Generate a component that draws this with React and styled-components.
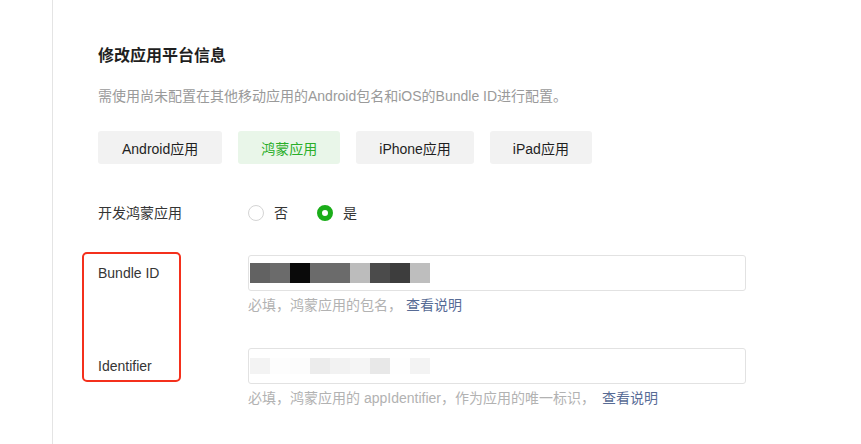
import React from 'react';
import styled, { createGlobalStyle } from 'styled-components';

const GlobalStyle = createGlobalStyle`
  html, body {
    margin: 0;
    padding: 0;
    background: #fff;
  }
  body {
    font-family: "Liberation Sans", "Noto Sans CJK SC", sans-serif;
    color: #353535;
  }
`;

const Page = styled.div`
  display: flex;
  height: 444px;
  overflow: hidden;
`;

const Sidebar = styled.div`
  width: 52px;
  flex-shrink: 0;
  border-right: 1px solid #e4e4e4;
`;

const Main = styled.div`
  flex: 1;
  padding: 44px 0 0 45px;
`;

const Title = styled.h2`
  margin: 0;
  font-size: 16px;
  line-height: 24px;
  font-weight: 600;
  color: #1f1f1f;
`;

const Desc = styled.p`
  margin: 18px 0 0;
  font-size: 14px;
  line-height: 20px;
  color: #9a9a9a;
`;

const Tabs = styled.div`
  display: flex;
  gap: 16px;
  margin-top: 25px;
`;

const Tab = styled.button`
  height: 33px;
  padding: 0 ${p => p.$pad}px;
  border: none;
  border-radius: 3px;
  font-family: inherit;
  font-size: 14px;
  background: ${p => (p.$active ? '#e9f6e9' : '#f2f2f2')};
  color: ${p => (p.$active ? '#2aae2a' : '#1f1f1f')};
  cursor: pointer;
`;

const Row = styled.div`
  display: flex;
  align-items: ${p => (p.$top ? 'flex-start' : 'center')};
  margin-top: ${p => p.$gap || 0}px;
`;

const Label = styled.div`
  width: 150px;
  flex-shrink: 0;
  font-size: 14px;
  line-height: ${p => p.$lh || 20}px;
  color: #353535;
`;

const RadioGroup = styled.div`
  display: flex;
  gap: 29px;
`;

const RadioItem = styled.label`
  display: flex;
  align-items: center;
  gap: 10px;
  font-size: 14px;
  line-height: 20px;
  color: #353535;
`;

const RadioDot = styled.span`
  box-sizing: border-box;
  width: 16px;
  height: 16px;
  border-radius: 50%;
  border: ${p => (p.$checked ? '5px solid #1aad19' : '1px solid #d4d4d4')};
  background: #fff;
`;

const FieldGroup = styled.div`
  position: relative;
  margin-top: 32px;
`;

const Highlight = styled.div`
  position: absolute;
  left: -16px;
  top: -3px;
  width: 99px;
  height: 130px;
  box-sizing: border-box;
  border: 2px solid #f4301c;
  border-radius: 5px;
  pointer-events: none;
`;

const Control = styled.div`
  display: flex;
  flex-direction: column;
`;

const InputBox = styled.div`
  box-sizing: border-box;
  width: 498px;
  height: 36px;
  border: 1px solid #e2e2e2;
  border-radius: 3px;
  background: #fff;
  display: flex;
  align-items: center;
  padding-left: 1px;
`;

const Mosaic = styled.div`
  display: flex;
`;

const Tile = styled.span`
  width: 20px;
  height: ${p => p.$h}px;
  background: ${p => p.$c};
`;

const Hint = styled.div`
  margin-top: 4px;
  font-size: 14px;
  line-height: 20px;
  color: #b2b2b2;
`;

const Link = styled.a`
  margin-left: ${p => p.$gap || 4}px;
  color: #576b95;
  text-decoration: none;
`;

const darkTiles = ['#626262', '#6b6b6b', '#0a0a0a', '#6b6b6b', '#6b6b6b', '#bcbcbc', '#4b4b4b', '#3d3d3d', '#bebebe'];
const lightTiles = ['#f3f3f3', '#fdfdfd', '#fcfcfc', '#ececec', '#f2f2f2', '#f5f5f5', '#e8e8e8', '#fefefe', '#f3f3f3'];

const tabs = [
  { name: 'Android应用', pad: 24 },
  { name: '鸿蒙应用', pad: 23, active: true },
  { name: 'iPhone应用', pad: 23 },
  { name: 'iPad应用', pad: 23 },
];

export default function App() {
  return (
    <>
      <GlobalStyle />
      <Page>
        <Sidebar />
        <Main>
          <Title>修改应用平台信息</Title>
          <Desc>需使用尚未配置在其他移动应用的Android包名和iOS的Bundle ID进行配置。</Desc>
          <Tabs>
            {tabs.map(t => (
              <Tab key={t.name} $pad={t.pad} $active={t.active}>{t.name}</Tab>
            ))}
          </Tabs>

          <Row $gap={39}>
            <Label>开发鸿蒙应用</Label>
            <RadioGroup>
              <RadioItem><RadioDot />否</RadioItem>
              <RadioItem><RadioDot $checked />是</RadioItem>
            </RadioGroup>
          </Row>

          <FieldGroup>
            <Row $top>
              <Label $lh={36}>Bundle ID</Label>
              <Control>
                <InputBox>
                  <Mosaic>
                    {darkTiles.map((c, i) => <Tile key={i} $c={c} $h={20} />)}
                  </Mosaic>
                </InputBox>
                <Hint>必填，鸿蒙应用的包名，<Link href="#">查看说明</Link></Hint>
              </Control>
            </Row>
            <Row $gap={33} $top>
              <Label $lh={36}>Identifier</Label>
              <Control>
                <InputBox>
                  <Mosaic>
                    {lightTiles.map((c, i) => <Tile key={i} $c={c} $h={16} />)}
                  </Mosaic>
                </InputBox>
                <Hint>必填，鸿蒙应用的 appIdentifier，作为应用的唯一标识，<Link href="#" $gap={7}>查看说明</Link></Hint>
              </Control>
            </Row>
            <Highlight />
          </FieldGroup>
        </Main>
      </Page>
    </>
  );
}
